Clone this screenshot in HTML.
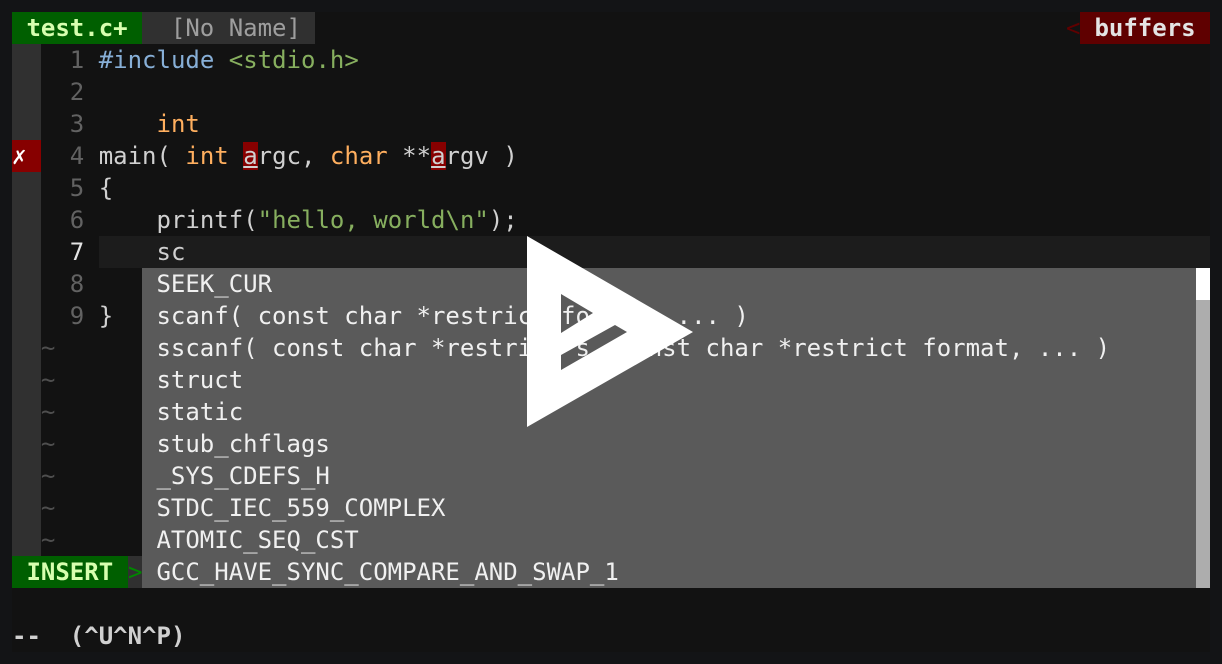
<!DOCTYPE html>
<html><head><style>
*{margin:0;padding:0}
body{width:1222px;height:664px;background:#131416;overflow:hidden;position:relative;font-family:"DejaVu Sans Mono","Liberation Mono",monospace;font-size:24px;color:#d0d0d0}
#term{position:absolute;left:12px;top:12px;width:1198px;height:640px;background:#121212}
.r{position:absolute;left:12px;height:32px;line-height:32px;white-space:pre}
.b{position:absolute}
.n{color:#626262}.k{color:#87afd7}.s{color:#87af5f}.t{color:#ffaf5f}
.e{background:#870000;text-decoration:underline}
</style></head><body>
<div id="term"></div>
<!-- tabline -->
<div class="b" style="left:12px;top:12px;width:130px;height:32px;background:#005f00"></div>
<div class="b" style="left:142px;top:12px;width:173px;height:32px;background:#303030"></div>
<div class="r" style="top:12px;font-weight:bold;color:#d7ffaf"> test.c+ </div>
<div class="r" style="top:12px;left:142px;color:#9e9e9e">  [No Name] </div>
<div class="r" style="top:12px;left:1066px;color:#5f0000">&lt;</div>
<div class="b" style="left:1080px;top:12px;width:130px;height:32px;background:#5f0000"></div>
<div class="r" style="top:12px;left:1080px;font-weight:bold;color:#e4e4e4"> buffers </div>
<!-- gutter -->
<div class="b" style="left:12px;top:44px;width:29px;height:512px;background:#303030"></div>
<div class="b" style="left:12px;top:140px;width:29px;height:32px;background:#870000"></div>
<div class="r" style="top:140px;color:#fff">✗</div>
<!-- cursorline -->
<div class="b" style="left:99px;top:236px;width:1111px;height:32px;background:#1c1c1c"></div>
<div class="r" style="top:44px"><span class="n">    1 </span><span class="k">#include</span> <span class="s">&lt;stdio.h&gt;</span></div>
<div class="r" style="top:76px"><span class="n">    2 </span></div>
<div class="r" style="top:108px"><span class="n">    3 </span>    <span class="t">int</span></div>
<div class="r" style="top:140px"><span class="n">    4 </span>main( <span class="t">int</span> <span class="e">a</span>rgc, <span class="t">char</span> **<span class="e">a</span>rgv )</div>
<div class="r" style="top:172px"><span class="n">    5 </span>{</div>
<div class="r" style="top:204px"><span class="n">    6 </span>    printf(<span class="s">"hello, world\n"</span>);</div>
<div class="r" style="top:236px"><span style="color:#e4e4e4">    7 </span>    sc</div>
<div class="r" style="top:268px"><span class="n">    8 </span></div>
<div class="r" style="top:300px"><span class="n">    9 </span>}</div>
<div class="r" style="top:332px;color:#4e4e4e">  ~</div>
<div class="r" style="top:364px;color:#4e4e4e">  ~</div>
<div class="r" style="top:396px;color:#4e4e4e">  ~</div>
<div class="r" style="top:428px;color:#4e4e4e">  ~</div>
<div class="r" style="top:460px;color:#4e4e4e">  ~</div>
<div class="r" style="top:492px;color:#4e4e4e">  ~</div>
<div class="r" style="top:524px;color:#4e4e4e">  ~</div>
<!-- status -->
<div class="b" style="left:12px;top:556px;width:116px;height:32px;background:#005f00"></div>
<div class="b" style="left:128px;top:556px;width:14px;height:32px;background:#303030"></div>
<div class="r" style="top:556px;font-weight:bold;color:#d7ffaf"> INSERT </div>
<div class="r" style="top:556px;left:128px;color:#008700">&gt;</div>
<!-- popup -->
<div class="b" style="left:142px;top:268px;width:1054px;height:320px;background:#5a5a5a"></div>
<div class="b" style="left:1196px;top:268px;width:14px;height:320px;background:#adadad"></div>
<div class="b" style="left:1196px;top:268px;width:14px;height:32px;background:#fff"></div>
<div class="r" style="left:142px;top:268px;color:#f0f0f0"> SEEK_CUR</div>
<div class="r" style="left:142px;top:300px;color:#f0f0f0"> scanf( const char *restrict format, ... )</div>
<div class="r" style="left:142px;top:332px;color:#f0f0f0"> sscanf( const char *restrict s, const char *restrict format, ... )</div>
<div class="r" style="left:142px;top:364px;color:#f0f0f0"> struct</div>
<div class="r" style="left:142px;top:396px;color:#f0f0f0"> static</div>
<div class="r" style="left:142px;top:428px;color:#f0f0f0"> stub_chflags</div>
<div class="r" style="left:142px;top:460px;color:#f0f0f0"> _SYS_CDEFS_H</div>
<div class="r" style="left:142px;top:492px;color:#f0f0f0"> STDC_IEC_559_COMPLEX</div>
<div class="r" style="left:142px;top:524px;color:#f0f0f0"> ATOMIC_SEQ_CST</div>
<div class="r" style="left:142px;top:556px;color:#f0f0f0"> GCC_HAVE_SYNC_COMPARE_AND_SWAP_1</div>
<!-- cmdline -->
<div class="r" style="top:620px;font-weight:bold;color:#d0d0d0">--  (^U^N^P)</div>
<!-- play -->
<svg class="b" style="left:0;top:0" width="1222" height="664">
<path fill="#fff" fill-rule="evenodd" d="M527 236 L693 332 L527 427 Z M561 294 L593 313 L561 333 Z M561 355 L615 325 L627 332 L561 370 Z"/>
</svg>
</body></html>
